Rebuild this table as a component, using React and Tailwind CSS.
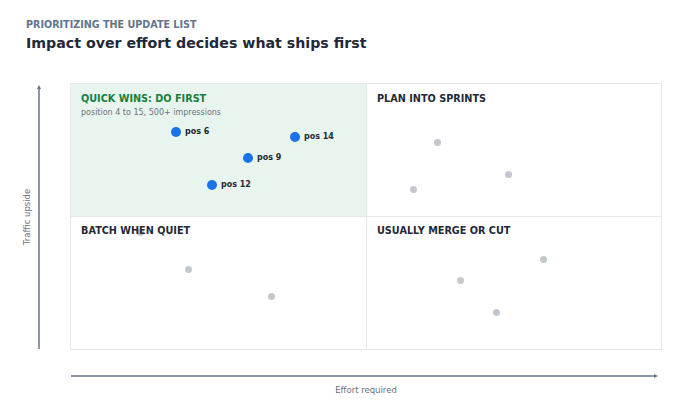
import React from "react";

function BlueDot({ pos, label }) {
  return (
    <div className={`absolute flex h-[10px] items-center gap-[4px] z-10 ${pos}`}>
      <span className="block h-[10px] w-[10px] rounded-full bg-[#1a73e8]" />
      <span className="text-[8px] font-bold leading-none text-[#1f2937]">{label}</span>
    </div>
  );
}

function GrayDot({ pos }) {
  return <span className={`absolute block h-[7px] w-[7px] rounded-full bg-[#c3c7ce] ${pos}`} />;
}

export default function App() {
  return (
    <div
      className="h-[420px] w-[700px] bg-white"
      style={{ fontFamily: '"DejaVu Sans", Verdana, sans-serif' }}
    >
      <div className="px-[26px] pt-[19px]">
        <div className="text-[9.6px] font-bold leading-[12px] text-[#64748b]">
          PRIORITIZING THE UPDATE LIST
        </div>
        <div className="mt-[3px] text-[14.2px] font-bold leading-[18px] text-[#1f2937]">
          Impact over effort decides what ships first
        </div>
      </div>

      <div className="mt-[31px] flex pl-[21px]">
        <div className="flex h-[267px] w-[12px] items-center justify-center">
          <span className="-rotate-90 whitespace-nowrap text-[8.5px] leading-[12px] text-[#6b7280]">
            Traffic upside
          </span>
        </div>
        <svg className="ml-[2px]" width="8" height="267" viewBox="0 0 8 267">
          <line x1="4" y1="5" x2="4" y2="266" stroke="#64748b" strokeWidth="1.5" />
          <path d="M4 2 L6 6 L2 6 Z" fill="#64748b" />
        </svg>
        <div className="relative ml-[27px] grid h-[267px] w-[592px] grid-cols-[296px_1fr] grid-rows-2 border border-[#e5e7eb]">
          <div className="border-b border-r border-[#e5e7eb] bg-[#e8f5ee] px-[10px] pt-[9px]">
            <div className="relative z-20 text-[9.7px] font-bold leading-[12px] text-[#15803d]">
              QUICK WINS: DO FIRST
            </div>
            <div className="mt-[3px] text-[8px] leading-[10px] text-[#6b7280]">
              position 4 to 15, 500+ impressions
            </div>
          </div>
          <div className="border-b border-[#e5e7eb] px-[10px] pt-[9px]">
            <div className="relative z-20 text-[9.7px] font-bold leading-[12px] text-[#1f2937]">
              PLAN INTO SPRINTS
            </div>
          </div>
          <div className="border-r border-[#e5e7eb] px-[10px] pt-[8px]">
            <div className="relative z-20 text-[9.7px] font-bold leading-[12px] text-[#1f2937]">
              BATCH WHEN QUIET
            </div>
          </div>
          <div className="px-[10px] pt-[8px]">
            <div className="relative z-20 text-[9.7px] font-bold leading-[12px] text-[#1f2937]">
              USUALLY MERGE OR CUT
            </div>
          </div>

          <BlueDot pos="left-[100px] top-[43px]" label="pos 6" />
          <BlueDot pos="left-[219px] top-[48px]" label="pos 14" />
          <BlueDot pos="left-[172px] top-[69px]" label="pos 9" />
          <BlueDot pos="left-[136px] top-[96px]" label="pos 12" />

          <GrayDot pos="left-[363px] top-[55px]" />
          <GrayDot pos="left-[434px] top-[87px]" />
          <GrayDot pos="left-[339px] top-[102px]" />

          <GrayDot pos="left-[66px] top-[145px]" />
          <GrayDot pos="left-[114px] top-[182px]" />
          <GrayDot pos="left-[197px] top-[209px]" />

          <GrayDot pos="left-[469px] top-[172px]" />
          <GrayDot pos="left-[386px] top-[193px]" />
          <GrayDot pos="left-[422px] top-[225px]" />
        </div>
      </div>

      <div className="ml-[70px] mt-[22px] w-[592px]">
        <svg width="592" height="8" viewBox="0 0 592 8" className="block">
          <line x1="1" y1="4" x2="584" y2="4" stroke="#64748b" strokeWidth="1.5" />
          <path d="M588 4 L584 2 L584 6 Z" fill="#64748b" />
        </svg>
        <div className="mt-[4px] text-center text-[8.5px] leading-[12px] text-[#6b7280]">
          Effort required
        </div>
      </div>
    </div>
  );
}
